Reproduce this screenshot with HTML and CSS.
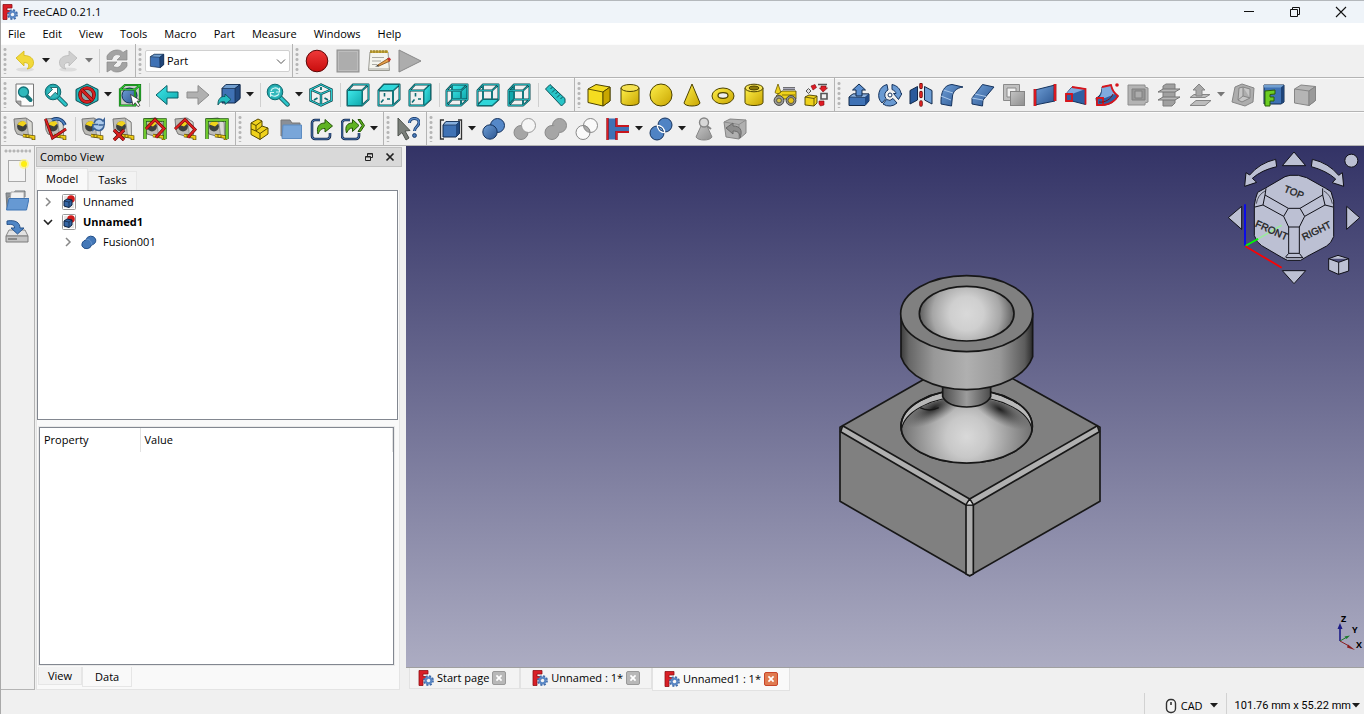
FILE: index.html
```html
<!DOCTYPE html>
<html lang="en">
<head>
<meta charset="utf-8">
<title>FreeCAD 0.21.1</title>
<link rel="stylesheet" href="styles.css">
</head>
<body>
<svg class="defs" aria-hidden="true">
  <defs>
    <linearGradient id="gBlue" x1="0" y1="0" x2="1" y2="1"><stop offset="0" stop-color="#6fa0d8"/><stop offset="1" stop-color="#2c5590"/></linearGradient>
    <linearGradient id="gYel" x1="0" y1="0" x2="1" y2="1"><stop offset="0" stop-color="#fff04a"/><stop offset="1" stop-color="#c8a400"/></linearGradient>
    <linearGradient id="gGrey" x1="0" y1="0" x2="1" y2="1"><stop offset="0" stop-color="#c4c4c4"/><stop offset="1" stop-color="#8e8e8e"/></linearGradient>
    <linearGradient id="gTeal" x1="0" y1="0" x2="1" y2="1"><stop offset="0" stop-color="#3fe8ea"/><stop offset="1" stop-color="#0fa8ac"/></linearGradient>
    <linearGradient id="gRed" x1="0" y1="0" x2="0" y2="1"><stop offset="0" stop-color="#f03a3a"/><stop offset="1" stop-color="#c80d0d"/></linearGradient>
  </defs>
  <symbol id="logo" viewBox="0 0 16 16">
    <path d="M1 .5h9V4H5v2.500h4v3H5v6H1z" fill="#d91f26" stroke="#8e1015" stroke-width=".8"/>
    <circle cx="10.500" cy="10.500" r="4.400" fill="none" stroke="#3f6aa8" stroke-width="2" stroke-dasharray="2 1.456"/>
    <circle cx="10.500" cy="10.500" r="2.900" fill="none" stroke="#5a87c4" stroke-width="2.200"/>
  </symbol>
  <symbol id="cubeline" viewBox="0 0 24 24">
    <path d="M1.500 7.500h14.500v15H1.500zM7 1.500h15.500v15H7zM1.500 7.500 7 1.500M16 7.500l6.500-6M16 22.500l6.500-6M1.500 22.500l5.500-6" fill="none" stroke="#0a4a50" stroke-width="2" stroke-linejoin="round"/>
    <path d="M1.500 7.500h14.500v15H1.500zM7 1.500h15.500v15H7zM1.500 7.500 7 1.500M16 7.500l6.500-6M16 22.500l6.500-6M1.500 22.500l5.500-6" fill="none" stroke="#2ccfd2" stroke-width=".7"/>
  </symbol>
  <symbol id="cubeopen" viewBox="0 0 24 24">
    <path d="M1.500 7.500h14.500v15H1.500zM1.500 7.500 7 1.500h15.500v15l-6.500 6M16 7.500l6.500-6" fill="none" stroke="#0a4a50" stroke-width="2" stroke-linejoin="round"/>
    <path d="M1.500 7.500h14.500v15H1.500zM1.500 7.500 7 1.500h15.500v15l-6.500 6M16 7.500l6.500-6" fill="none" stroke="#2ccfd2" stroke-width=".7"/>
    <path d="M7.500 10v3.500M6.500 16.500 4 19.500M10 16h3" fill="none" stroke="#0d6c72" stroke-width="1.600"/>
  </symbol>
  <symbol id="tape" viewBox="0 0 24 24">
    <path d="M1 2 13 1l6 4 .5 14-3 1.500L4 17 2 13z" fill="#bdbcb7" stroke="#777" stroke-width="1"/>
    <path d="M13.500 1.500l5.500 4 .5 14-4-1z" fill="#dadad4" stroke="#777" stroke-width=".6"/>
    <circle cx="9" cy="9.500" r="4.900" fill="#3c403f"/>
    <path d="M4.500 7.500a5 5 0 0 1 9-1l-3.500 3z" fill="#f0d21b"/>
    <path d="M10 18.500 20.500 20v3" fill="none" stroke="#574500" stroke-width="3.600"/>
    <path d="M10 18.500 20.500 20v2.500" fill="none" stroke="#f1cf18" stroke-width="2.200"/>
    <path d="M13 18v2m3-1.500v2" stroke="#574500" stroke-width=".8"/>
  </symbol>
  <symbol id="mag" viewBox="0 0 24 24">
    <path d="M14 14l7.500 7.500" stroke="#0b4b50" stroke-width="4.400" stroke-linecap="round"/>
    <path d="M14 14l7.500 7.500" stroke="#2cc4c8" stroke-width="2.800" stroke-linecap="round"/>
    <circle cx="9" cy="9" r="7.800" fill="#1fa9ad" stroke="#0f6a70" stroke-width="1"/>
    <circle cx="9" cy="9" r="6" fill="#35b9bd"/>
  </symbol>
  <symbol id="bluecube" viewBox="0 0 24 24">
    <path d="M2 5.500 8 2h14v15.500L17 22 2 20z" fill="#3f72b5" stroke="#11294a"/>
    <path d="M2 5.500 8 2h14l-6 4.500z" fill="#729fcf" stroke="#11294a" stroke-width=".8"/>
    <path d="M16 6.500 22 2v15.500L16.500 22z" fill="#1f4478" stroke="#11294a" stroke-width=".8"/>
  </symbol>
  <symbol id="docpart" viewBox="0 0 16 16">
    <rect x="1.500" y=".5" width="13" height="15" rx="1" fill="#fff" stroke="#9a9a9a"/>
    <rect x="3" y="2" width="10" height="12" fill="#e6e6e6"/>
    <circle cx="10" cy="5" r="3.800" fill="#cf1c1c"/>
    <path d="M3 7l3-2 5 1v5l-3 2.500-5-1.500z" fill="#3465a4" stroke="#0f2340"/>
    <path d="M3 7l5 1 3-2M8 8v5" fill="none" stroke="#0f2340" stroke-width=".7"/>
  </symbol>
  <symbol id="down" viewBox="0 0 8 5"><path d="M0 0h8L4 4.500z"/></symbol>
  <symbol id="chev" viewBox="0 0 8 10"><path d="M2 1l4 4-4 4" fill="none" stroke="currentColor" stroke-width="1.500"/></symbol>
</svg>

<header class="titlebar">
  <svg class="i16"><use href="#logo"/></svg>
  <h1>FreeCAD 0.21.1</h1>
  <div class="winbtns">
    <button aria-label="Minimize"><svg viewBox="0 0 12 12"><path d="M1 5.500h10" stroke="#111"/></svg></button>
    <button aria-label="Restore"><svg viewBox="0 0 12 12"><path d="M1.500 3.500h7v7h-7zM3.500 3V1.500h7v7H9" fill="none" stroke="#111"/></svg></button>
    <button aria-label="Close"><svg viewBox="0 0 12 12"><path d="M1 1l10 10M11 1L1 11" stroke="#111" stroke-width="1.100"/></svg></button>
  </div>
</header>
<nav class="menubar">
  <button>File</button><button>Edit</button><button>View</button><button>Tools</button><button>Macro</button><button>Part</button><button>Measure</button><button>Windows</button><button>Help</button>
</nav>

<div class="toolrow">
  <div class="toolbar">
    <span class="grip"></span>
    <button class="tool drop" aria-label="Undo"><svg viewBox="0 0 24 24"><ellipse cx="12" cy="20.500" rx="9" ry="2" fill="#ddd"/><path d="M3 9l8-7v4.500c6 0 10 3 9.500 8-.5 3.500-3 5-6.500 5.500 2.500-2 3-6.500-3-6.500V17z" fill="#f2d93b" stroke="#d3b716" stroke-width=".8"/></svg><svg class="caret"><use href="#down"/></svg></button>
    <button class="tool drop dim" aria-label="Redo"><svg viewBox="0 0 24 24"><ellipse cx="12" cy="20.500" rx="9" ry="2" fill="#ddd"/><path d="M21 9l-8-7v4.500c-6 0-10 3-9.500 8 .5 3.500 3 5 6.500 5.500-2.500-2-3-6.500 3-6.500V17z" fill="#cfcfcf" stroke="#b9b9b9" stroke-width=".8"/></svg><svg class="caret"><use href="#down"/></svg></button>
    <span class="sep"></span>
    <button class="tool" aria-label="Refresh"><svg viewBox="0 0 24 24"><path d="M2 10.500V7c4-7 13-7.500 16-3.500L22 1v10h-10l4-4c-4-3-8-1-9 3.500z" fill="#a3a3a3" stroke="#888" stroke-width=".7"/><path d="M22 13.500V17c-4 7-13 7.500-16 3.500L2 23V13h10l-4 4c4 3 8 1 9-3.500z" fill="#a3a3a3" stroke="#888" stroke-width=".7"/></svg></button>
  </div>
  <div class="toolbar">
    <span class="grip"></span>
    <div class="workbench">
      <svg viewBox="0 0 24 24" class="i16"><use href="#bluecube"/></svg>
      <select aria-label="Workbench"><option>Part</option></select>
      <svg viewBox="0 0 10 6" class="arrow"><path d="M1 .5l4 4 4-4" fill="none" stroke="#555"/></svg>
    </div>
  </div>
  <div class="toolbar last">
    <span class="grip"></span>
    <button class="tool" aria-label="Record macro"><svg viewBox="0 0 24 24"><circle cx="12" cy="12" r="10.800" fill="url(#gRed)" stroke="#5c0808"/></svg></button>
    <button class="tool" aria-label="Stop macro"><svg viewBox="0 0 24 24"><rect x="1" y="1" width="22" height="22" fill="#adadad" stroke="#8f8f8f"/><rect x="2.500" y="2.500" width="19" height="19" fill="none" stroke="#bdbdbd"/></svg></button>
    <button class="tool" aria-label="Macros"><svg viewBox="0 0 24 24"><path d="M3 3h18l1.500 18.500h-21z" fill="#f4f4ee" stroke="#9b9b94"/><path d="M3 1.500h18v2.500H3z" fill="#c8a93a"/><path d="M4 1v3M7 1v3M10 1v3M13 1v3M16 1v3M19 1v3" stroke="#8b7420"/><path d="M5 8.500h12M5 12h9M5 15.500h5M2 20h20" stroke="#a9a9a3"/><path d="M10 16.500l11-7 2 2.500-11 5z" fill="#e8a04a" stroke="#7d4a12" stroke-width=".8"/><path d="M8 17.500l3-1.500 1 1.500z" fill="#333"/><path d="M20 9.500l2 3 2-2-1.500-2z" fill="#c02f2f"/></svg></button>
    <button class="tool" aria-label="Execute macro"><svg viewBox="0 0 24 24"><path d="M1 1l22 11L1 23z" fill="#adadad" stroke="#8a8a8a"/></svg></button>
  </div>
</div>

<div class="toolrow">
  <div class="toolbar">
    <span class="grip"></span>
    <button class="tool" aria-label="Fit all"><svg viewBox="0 0 24 24"><path d="M3 1h17.500v22H7.500L3 19z" fill="#fbfbfb" stroke="#777"/><path d="M3 18h5v5z" fill="#aaa" stroke="#777" stroke-width=".7"/><path d="M13.500 13l4 4" stroke="#15777c" stroke-width="4" stroke-linecap="round"/><circle cx="10.500" cy="9" r="5" fill="#2fb9bc" stroke="#137077" stroke-width="1.300"/></svg></button>
    <button class="tool" aria-label="Fit selection"><svg viewBox="0 0 24 24"><use href="#mag"/><path d="M3.500 11.500l5-5-2-2h7v7l-2.200-2.300-5 5z" fill="#fff" stroke="#0d5359" stroke-width=".8"/></svg></button>
    <button class="tool drop" aria-label="Draw style"><svg viewBox="0 0 24 24"><path d="M1 6.500 12 1l11 5.500v11L12 23 1 17.500z" fill="#25b9bd" stroke="#0b4b50"/><circle cx="12" cy="12" r="7" fill="#8fa8aa" stroke="#5c0505" stroke-width="3.600"/><circle cx="12" cy="12" r="7" fill="none" stroke="#d62121" stroke-width="2.400"/><path d="M7 7l10 10" stroke="#5c0505" stroke-width="3.600"/><path d="M6.800 6.800l10.400 10.400" stroke="#d62121" stroke-width="2.400"/></svg><svg class="caret"><use href="#down"/></svg></button>
    <button class="tool" aria-label="Bounding box"><svg viewBox="0 0 24 24"><path d="M2 6.500 7 2h15v15l-5 5.500H2z" fill="#c9ccc9"/><circle cx="11.500" cy="12.500" r="7.500" fill="url(#gBlue)" stroke="#142f57"/><path d="M2 6.500h15v16H2zM2 6.500 7 2h15v15l-5 5.500M17 6.500 22 2" fill="none" stroke="#0f5a12" stroke-width="2.200"/><path d="M2 6.500h15v16H2zM2 6.500 7 2h15v15l-5 5.500M17 6.500 22 2" fill="none" stroke="#30c935" stroke-width="1.100"/><path d="M12.500 11.500l10 6-3.500.8 3 4-2 1.400-2.800-4-2.200 2.800z" fill="#fff" stroke="#333" stroke-width=".8"/></svg></button>
    <span class="sep"></span>
    <button class="tool" aria-label="Back"><svg viewBox="0 0 24 24"><path d="M1 12 12 2.500v6.500h11v6H12v6.500z" fill="url(#gTeal)" stroke="#0b5f66"/></svg></button>
    <button class="tool" aria-label="Forward"><svg viewBox="0 0 24 24"><path d="M23 12 12 2.500v6.500H1v6h11v6.500z" fill="#b0b0b0" stroke="#8d8d8d"/></svg></button>
    <button class="tool drop" aria-label="Linked object"><svg viewBox="0 0 24 24"><path d="M5 5.500 9 1.500h14v14L18 20H5z" fill="#3f72b5" stroke="#11294a"/><path d="M5 5.500 9 1.500h14l-5 4z" fill="#729fcf" stroke="#11294a" stroke-width=".7"/><path d="M18 5.500l5-4v14L18 20z" fill="#234a80" stroke="#11294a" stroke-width=".7"/><path d="M1 22c-.5-6 3-9 7-8.500V11l6 5.500-6 5V19c-3-1-5.500 0-7 3z" fill="#23bcc0" stroke="#0b4b50" stroke-width=".8"/></svg><svg class="caret"><use href="#down"/></svg></button>
    <span class="sep"></span>
    <button class="tool drop" aria-label="Zoom"><svg viewBox="0 0 24 24"><use href="#mag"/><path d="M5 8c1-3.500 6-4 7.500-1.500l1-1V9H10M13 10.500c-1 3-6 3.500-7.500 1.500l-1 1V9.500H8" fill="none" stroke="#d5f7f7" stroke-width="1.100"/></svg><svg class="caret"><use href="#down"/></svg></button>
    <button class="tool" aria-label="Isometric"><svg viewBox="0 0 24 24"><path d="M1.500 6.500 12 1.500l10.500 5v11L12 22.500l-10.500-5zM1.500 6.500 12 11l10.500-4.500M12 11v11.500" fill="none" stroke="#083c42" stroke-width="2.400"/><path d="M1.500 6.500 12 1.500l10.500 5v11L12 22.500l-10.500-5zM1.500 6.500 12 11l10.500-4.500M12 11v11.500" fill="none" stroke="#2ccfd2" stroke-width="1.100"/><path d="M12 4v3M5 17l3.500-2M19 17l-3.500-2" stroke="#0d6c72" stroke-width="1.800"/></svg></button>
    <span class="sep"></span>
    <button class="tool" aria-label="Front view"><svg viewBox="0 0 24 24"><use href="#cubeopen"/><path d="M1.500 7.500h14.500v15H1.500z" fill="url(#gTeal)" stroke="#0c6d72"/></svg></button>
    <button class="tool" aria-label="Top view"><svg viewBox="0 0 24 24"><use href="#cubeopen"/><path d="M1.500 7.500 7 1.500h15.500l-6.500 6z" fill="#2fd6d9" stroke="#0c6d72"/></svg></button>
    <button class="tool" aria-label="Right view"><svg viewBox="0 0 24 24"><use href="#cubeopen"/><path d="M16 7.500l6.500-6v15l-6.500 6z" fill="url(#gTeal)" stroke="#0c6d72"/></svg></button>
    <span class="sep"></span>
    <button class="tool" aria-label="Rear view"><svg viewBox="0 0 24 24"><path d="M7 2h15v14H7z" fill="url(#gTeal)"/><use href="#cubeline"/></svg></button>
    <button class="tool" aria-label="Bottom view"><svg viewBox="0 0 24 24"><use href="#cubeline"/><path d="M1.500 22.500l5.500-6h15.500l-6.500 6z" fill="#2fd6d9" stroke="#0c6d72"/></svg></button>
    <button class="tool" aria-label="Left view"><svg viewBox="0 0 24 24"><path d="M1.500 7.500l5.500-6v15l-5.500 6z" fill="#0fa8ac"/><use href="#cubeline"/></svg></button>
    <span class="sep"></span>
    <button class="tool" aria-label="Measure distance"><svg viewBox="0 0 24 24"><path d="M1.500 6 6 1.500 21 15.500v4L17.500 23z" fill="#27c4c7" stroke="#0b5158"/><path d="M8.500 4l-2 2M11 6.500l-3 3M13.500 9l-2 2M16 11.500l-3 3M18.500 14l-2 2" stroke="#0b5158"/></svg></button>
  </div>
  <div class="toolbar">
    <span class="grip"></span>
    <button class="tool" aria-label="Box"><svg viewBox="0 0 24 24"><path d="M1 6 9 1.500l14 2.500v14l-7 5L1 19.500z" fill="#f4dc20" stroke="#4d4300"/><path d="M1 6l15 3 7-5M16 9v14" fill="none" stroke="#4d4300" stroke-width=".9"/><path d="M16 9l7-5v14l-7 5z" fill="#c8a600" stroke="#4d4300" stroke-width=".9"/></svg></button>
    <button class="tool" aria-label="Cylinder"><svg viewBox="0 0 24 24"><path d="M3 5v14.500c0 4 18 4 18 0V5z" fill="url(#gYel)" stroke="#4d4300"/><ellipse cx="12" cy="5" rx="9" ry="3.500" fill="#f5e252" stroke="#4d4300"/></svg></button>
    <button class="tool" aria-label="Sphere"><svg viewBox="0 0 24 24"><circle cx="12" cy="12" r="11" fill="url(#gYel)" stroke="#4d4300"/></svg></button>
    <button class="tool" aria-label="Cone"><svg viewBox="0 0 24 24"><path d="M12 1 4 20c1 4 15 4 16 0z" fill="url(#gYel)" stroke="#4d4300"/></svg></button>
    <button class="tool" aria-label="Torus"><svg viewBox="0 0 24 24"><ellipse cx="12" cy="13" rx="11" ry="8" fill="url(#gYel)" stroke="#4d4300"/><ellipse cx="12" cy="12.500" rx="5" ry="2.800" fill="#efefef" stroke="#4d4300" stroke-width="1.200"/></svg></button>
    <button class="tool" aria-label="Tube"><svg viewBox="0 0 24 24"><path d="M3 5v14.500c0 4 18 4 18 0V5z" fill="url(#gYel)" stroke="#4d4300"/><ellipse cx="12" cy="5" rx="9" ry="3.800" fill="#f5e252" stroke="#4d4300"/><ellipse cx="12" cy="5" rx="5" ry="2" fill="#8d7a0a" stroke="#4d4300"/></svg></button>
    <button class="tool" aria-label="Create primitives"><svg viewBox="0 0 24 24"><path d="M5 1 2 9.500c1 1.500 5 1.500 6 0z" fill="#efd21c" stroke="#6d5d00" stroke-width=".8"/><path d="M10 5.500h12" stroke="#666" stroke-width="3"/><path d="M10 5.500h12" stroke="#aab" stroke-width="1.300"/><path d="M3 13l6-5h14v8H5z" fill="#efd21c" stroke="#4d4300" stroke-width=".8"/><path d="M9 12h13" stroke="#8a7500"/><circle cx="6" cy="17.500" r="4.900" fill="#9a9a95" stroke="#444"/><circle cx="6" cy="17.500" r="2.400" fill="#d8c44a" stroke="#444" stroke-width=".8"/><circle cx="18" cy="17.500" r="4.900" fill="#9a9a95" stroke="#444"/><circle cx="18" cy="17.500" r="3" fill="#e8c41a" stroke="#444" stroke-width=".8"/></svg></button>
    <button class="tool" aria-label="Shape builder"><svg viewBox="0 0 24 24"><path d="M1 14l4-2 8 1v7l-3 3-9-1z" fill="#efd21c" stroke="#4d4300" stroke-width=".9"/><path d="M1 14l9 1.500 3-2.500M10 15.500V23" fill="none" stroke="#4d4300" stroke-width=".8"/><path d="M14 1.500h9M17 10.500h6v5.500h-6z" fill="none" stroke="#555" stroke-width="1.600"/><path d="M2 8l2.500-2.500L7 8l-2.500 2.500z" fill="#ddd" stroke="#555"/><path d="M7 3l4-1.500 1.500 3L9 7zM17 3h5v2h1.500L19 9l-3.500-4H17zM15 18h5v4l-3.500 1L15 21z" fill="#e01b24" stroke="#7a0a0f" stroke-width=".6"/></svg></button>
  </div>
  <div class="toolbar last">
    <span class="grip"></span>
    <button class="tool" aria-label="Extrude"><svg viewBox="0 0 24 24"><path d="M2 14l4-3h16v7l-4 4.500H2z" fill="#3f72b5" stroke="#11294a"/><path d="M2 14l4-3h16l-4 3.500z" fill="#8fb4e0" stroke="#11294a" stroke-width=".7"/><path d="M18 14.500l4-3.500v7l-4 4.500z" fill="#204a87"/><path d="M12 1l6.500 6H15v6H9V7H5.500z" fill="#5b8fd0" stroke="#11294a"/></svg></button>
    <button class="tool" aria-label="Revolve"><svg viewBox="0 0 24 24"><path d="M9 1.500A11 11 0 0 0 4 20l4-4.500A5.500 5.500 0 0 1 10 7zM5 21a11 11 0 0 0 14-1l-4-4.500a5 5 0 0 1-6.500 1z" fill="#6a9ad2" stroke="#15335e"/><path d="M14 1.500c5 1 8.500 4.500 9 9h1l-3.500 6-5-6h2.500c0-1.500-1.500-3-4-4z" fill="#6a9ad2" stroke="#15335e"/><circle cx="12" cy="12" r="2" fill="#fff" stroke="#15335e"/></svg></button>
    <button class="tool" aria-label="Mirror"><svg viewBox="0 0 24 24"><path d="M1 7.500l7.500-4V17L1 21z" fill="#2a5a9c" stroke="#11294a"/><path d="M15.500 3.500l7.500 4V21l-7.500-4z" fill="#6f9fd6" stroke="#11294a"/><path d="M12 1.500v3M12 9.500v4M12 19v3" stroke="#5c0505" stroke-width="3.400" stroke-linecap="round"/><path d="M12 1.500v3M12 9.500v4M12 19v3" stroke="#d62121" stroke-width="2.200" stroke-linecap="round"/></svg></button>
    <button class="tool" aria-label="Fillet"><svg viewBox="0 0 24 24"><path d="M1 21c-.5-12 3-19 11-19.500L23 4c-7 1-10 5-10.500 9l-1 10z" fill="url(#gBlue)" stroke="#15335e"/><path d="M1 13l10 4M3.500 7l9.500 3" stroke="#a9c7ea"/></svg></button>
    <button class="tool" aria-label="Chamfer"><svg viewBox="0 0 24 24"><path d="M1 21v-6L11.500 1.500 23 4 12 17l-.5 6z" fill="url(#gBlue)" stroke="#15335e"/><path d="M1 15l11 2M4 11l11 2.500" stroke="#a9c7ea"/></svg></button>
    <button class="tool" aria-label="Make face"><svg viewBox="0 0 24 24"><path d="M1.500 1.500h16v16h-16zM5 5v9h9V5z" fill="#c0c0c0" fill-rule="evenodd" stroke="#8a8a8a"/><rect x="8.500" y="8.500" width="14" height="14" fill="url(#gGrey)" stroke="#848484"/></svg></button>
    <button class="tool" aria-label="Ruled surface"><svg viewBox="0 0 24 24"><path d="M2 7l20-5v16L2 22z" fill="url(#gBlue)" stroke="#15335e"/><path d="M2 6v17M22 1v17" stroke="#8a0a0a" stroke-width="2.800"/><path d="M2 6v17M22 1v17" stroke="#e01b24" stroke-width="1.800"/></svg></button>
    <button class="tool" aria-label="Loft"><svg viewBox="0 0 24 24"><path d="M2 11 8 4l13.500 2v15.500L8 18H2z" fill="#2f60a3" stroke="#15335e"/><path d="M2 11 8 4l13.500 2L8 11z" fill="#7fabdf"/><path d="M2 11h6v7H2zM8 4l13.500 2v15.500" fill="none" stroke="#d8151c" stroke-width="1.800"/></svg></button>
    <button class="tool" aria-label="Sweep"><svg viewBox="0 0 24 24"><path d="M1 15c5-2 6-7 6-11l9-2c1 5 3 8 7 11-3 6-9 9-15 9H2z" fill="#2f60a3" stroke="#15335e"/><path d="M7 4l9-2c1 5 2 7 4 9l-10 4H4c3-3 3-7 3-11z" fill="#7fabdf"/><path d="M2 15h6v7H2zM7 4l9-2c1 5 3 8 7 11-3 5-8 8-14 9" fill="none" stroke="#d8151c" stroke-width="1.800"/><path d="M4 19c6 1 12-3 14-8" fill="none" stroke="#7d0e14"/><circle cx="22" cy="2" r="1.800" fill="#d8151c"/></svg></button>
    <button class="tool" aria-label="Section"><svg viewBox="0 0 24 24"><path d="M2 2h17v2l3 1v14l-3 1v2H2z" fill="#b3b3b3" stroke="#8e8e8e"/><path d="M6 6h13v11H6z" fill="#969696" stroke="#808080"/><path d="M9 8h7v7H9z" fill="#adadad" stroke="#808080"/></svg></button>
    <button class="tool" aria-label="Cross sections"><svg viewBox="0 0 24 24"><path d="M6 3l3-2h9v19l-3 3H6z" fill="#a0a0a0" stroke="#7d7d7d"/><path d="M1 9l5-3h17l-5 3zM1 17l5-3h17l-5 3z" fill="#b7b7b7" stroke="#757575"/></svg></button>
    <button class="tool drop dim" aria-label="Offset"><svg viewBox="0 0 24 24"><path d="M2 22.500l6-5h15l-6 5zM2 14.500l4-3h16l-5 3z" fill="#bcbcbc" stroke="#858585"/><path d="M11 1l6 6h-3v6H8V7H5z" fill="#a9a9a9" stroke="#858585"/></svg><svg class="caret"><use href="#down"/></svg></button>
    <button class="tool" aria-label="Thickness"><svg viewBox="0 0 24 24"><path d="M4 4l7-3 12 4-1 14-8 4-13-4z" fill="#adadad" stroke="#868686"/><path d="M8 5l4-1 7 2v9l-8 4-4-2zM12 4v9l7 2M12 13l-5 4" fill="#c6c6c6" stroke="#868686"/></svg></button>
    <button class="tool" aria-label="Projection on surface"><svg viewBox="0 0 24 24"><path d="M2 2h20v17l-3 2H2z" fill="#3f72b5" stroke="#11294a"/><path d="M2 2h20l-3 2.500H2z" fill="#729fcf"/><path d="M19 4.500 22 2v17l-3 2z" fill="#1f4478"/><path d="M3 8l10-1v4l-5 .5V14h4v4H8v5H3z" fill="#6cce22" stroke="#2b6005"/></svg></button>
    <button class="tool" aria-label="Color per face"><svg viewBox="0 0 24 24"><path d="M1.500 6 8 2l14.500 1.500v14L16 22.500 1.500 20z" fill="#b5b5b5" stroke="#868686"/><path d="M1.500 6 16 8l6.500-4.500M16 8v14.500" fill="none" stroke="#868686"/><path d="M16 8l6.500-4.500v14L16 22.500z" fill="#9a9a9a" stroke="#868686"/></svg></button>
  </div>
</div>

<div class="toolrow">
  <div class="toolbar">
    <span class="grip"></span>
    <button class="tool" aria-label="Measure linear"><svg viewBox="0 0 24 24"><use href="#tape"/></svg></button>
    <button class="tool" aria-label="Measure angular"><svg viewBox="0 0 24 24"><use href="#tape"/><path d="M8 3c6-3 11 0 13 5" fill="none" stroke="#173a6b" stroke-width="3.400"/><path d="M8 3c6-3 11 0 13 5" fill="none" stroke="#4f83c4" stroke-width="1.800"/><path d="M1.500 2l7 19L22 12" fill="none" stroke="#6b0505" stroke-width="2.800"/><path d="M1.500 2l7 19L22 12" fill="none" stroke="#dc2020" stroke-width="1.700"/></svg></button>
    <span class="sep"></span>
    <button class="tool" aria-label="Refresh measurements"><svg viewBox="0 0 24 24"><use href="#tape"/><path d="M13 6c2-5 7-5 9-2l1.500-2v6h-6M23 9c-1 5-7 6-9.500 2.500L12 13V7.500h5" fill="#aecbeb" stroke="#3a6196" stroke-width="1.500"/></svg></button>
    <button class="tool" aria-label="Clear measurements"><svg viewBox="0 0 24 24"><use href="#tape"/><path d="M2 13l10 10M12 13L2 23" stroke="#5c0505" stroke-width="3.400"/><path d="M2 13l10 10M12 13L2 23" stroke="#dc2020" stroke-width="2.200"/></svg></button>
    <button class="tool" aria-label="Toggle all measurements"><svg viewBox="0 0 24 24"><use href="#tape"/><path d="M2 22V3h20v19" fill="none" stroke="#1d5c08" stroke-width="3.400"/><path d="M2 22V3h20v19" fill="none" stroke="#6fc92c" stroke-width="2"/><path d="M3 12 12 2.500l9 9-8 9" fill="none" stroke="#6b0505" stroke-width="3"/><path d="M3 12 12 2.500l9 9-8 9" fill="none" stroke="#dc2020" stroke-width="1.900"/></svg></button>
    <button class="tool" aria-label="Toggle 3D measurements"><svg viewBox="0 0 24 24"><use href="#tape"/><path d="M1 12 11 2.500l10 10-7 8" fill="none" stroke="#6b0505" stroke-width="3"/><path d="M1 12 11 2.500l10 10-7 8" fill="none" stroke="#dc2020" stroke-width="1.900"/></svg></button>
    <button class="tool" aria-label="Toggle delta measurements"><svg viewBox="0 0 24 24"><use href="#tape"/><path d="M2 22V3h20v19" fill="none" stroke="#1d5c08" stroke-width="3.400"/><path d="M2 22V3h20v19" fill="none" stroke="#6fc92c" stroke-width="2"/></svg></button>
  </div>
  <div class="toolbar">
    <span class="grip"></span>
    <button class="tool" aria-label="Create part"><svg viewBox="0 0 24 24"><path d="M3 13V6l7-4 4 2v5l6 2v6l-8 5.500-9-5z" fill="#f0d21c" stroke="#574a00"/><path d="M3 6l5 2.500L14 4M8 8.500V14l6-5M8 14l4 2.500 8-5.500M3 12l5 2M12 16.500v6" fill="none" stroke="#574a00"/></svg></button>
    <button class="tool" aria-label="Create group"><svg viewBox="0 0 24 24"><path d="M2 3h9l2 3h8v13H2z" fill="#8a8f96" stroke="#777"/><path d="M4 8h18.500v13.500H3z" fill="#79a6d9" stroke="#5d8cc2"/></svg></button>
    <button class="tool" aria-label="Create link"><svg viewBox="0 0 24 24"><path d="M10 3H5a3 3 0 0 0-3 3v13a3 3 0 0 0 3 3h12a3 3 0 0 0 3-3v-3" fill="none" stroke="#15294a" stroke-width="2.600"/><path d="M10 3H5a3 3 0 0 0-3 3v13a3 3 0 0 0 3 3h12a3 3 0 0 0 3-3v-3" fill="none" stroke="#4a78b5" stroke-width="1"/><path d="M8 17c-2-7 1-11 7-11V2.500L22.500 9 15 15v-3.500c-4 0-5 1.500-7 5.500z" fill="#5fb321" stroke="#245506"/></svg></button>
    <button class="tool drop" aria-label="Link actions"><svg viewBox="0 0 24 24"><path d="M9 3H4a3 3 0 0 0-3 3v13a3 3 0 0 0 3 3h11a3 3 0 0 0 3-3v-3" fill="none" stroke="#15294a" stroke-width="2.600"/><path d="M9 3H4a3 3 0 0 0-3 3v13a3 3 0 0 0 3 3h11a3 3 0 0 0 3-3v-3" fill="none" stroke="#4a78b5" stroke-width="1"/><path d="M5.500 16c-2-7 1-10 6-10V2.500L18 8.500l-6.500 6V11c-3 0-4 1.500-6 5zM17 2.500h2.500l4 6-4 6H17l4-6z" fill="#5fb321" stroke="#245506"/></svg><svg class="caret"><use href="#down"/></svg></button>
  </div>
  <div class="toolbar">
    <span class="grip"></span>
    <button class="tool" aria-label="What's this?"><svg viewBox="0 0 24 24"><path d="M2 1l12 12.500-5 .5 4 7-3 2-4-7.500L2 19z" fill="#7a7f7a" stroke="#4f544f"/><path d="M13.500 6c0-6 9.500-6 9.500-.5 0 4-4.500 4-4.500 8.500" fill="none" stroke="#173a6b" stroke-width="3"/><path d="M13.500 6c0-6 9.500-6 9.500-.5 0 4-4.500 4-4.500 8.500" fill="none" stroke="#5a8ac8" stroke-width="1.400"/><circle cx="18.500" cy="18.500" r="1.900" fill="#4a7cba" stroke="#173a6b"/></svg></button>
  </div>
  <div class="toolbar last">
    <span class="grip"></span>
    <button class="tool drop" aria-label="Compound tools"><svg viewBox="0 0 24 24"><path d="M5 3H1.500v19H5M19 3h3.500v19H19" fill="none" stroke="#333" stroke-width="1.300"/><path d="M4 8l3-3.500h13.500v12L17 20H4z" fill="#3f72b5" stroke="#11294a"/><path d="M4 8l3-3.500h13.500L17 8z" fill="#85aede" stroke="#11294a" stroke-width=".7"/><path d="M17 8l3.500-3.500v12L17 20z" fill="#234a80"/></svg><svg class="caret"><use href="#down"/></svg></button>
    <button class="tool" aria-label="Boolean"><svg viewBox="0 0 24 24"><circle cx="15.500" cy="8.500" r="7" fill="#5588c8" stroke="#15335e"/><circle cx="8" cy="15" r="7.200" fill="url(#gBlue)" stroke="#15335e"/></svg></button>
    <button class="tool" aria-label="Cut"><svg viewBox="0 0 24 24"><circle cx="8" cy="15.500" r="7" fill="#a6a6a6" stroke="#8a8a8a"/><circle cx="15.500" cy="8.500" r="7" fill="#f5f5f5" stroke="#999"/></svg></button>
    <button class="tool" aria-label="Union"><svg viewBox="0 0 24 24"><circle cx="15.500" cy="8.500" r="7" fill="#a6a6a6" stroke="#8a8a8a"/><circle cx="8" cy="15.500" r="7" fill="#a6a6a6" stroke="#8a8a8a"/><path d="M9.500 8.500h6v7H9.500z" fill="#a6a6a6"/></svg></button>
    <button class="tool" aria-label="Intersection"><svg viewBox="0 0 24 24"><circle cx="15.500" cy="8.500" r="7" fill="#fafafa" stroke="#888"/><circle cx="8" cy="15.500" r="7" fill="#fafafa" stroke="#888"/><path d="M8.500 8.600a7 7 0 0 1 6.500 6.800 7 7 0 0 1-6.500-6.800z" fill="#aaa" stroke="#888"/></svg></button>
    <button class="tool drop" aria-label="Join features"><svg viewBox="0 0 24 24"><path d="M2 1.500h8V9h13v6H10v7.500H2z" fill="#3f72b5"/><path d="M1.500 1v22M10.500 1v8H23M10.500 23v-8H23" fill="none" stroke="#7d0a0f" stroke-width="2.200"/><path d="M1.500 1v22M10.500 1v8H23M10.500 23v-8H23" fill="none" stroke="#e01b24" stroke-width="1.400"/></svg><svg class="caret"><use href="#down"/></svg></button>
    <button class="tool drop" aria-label="Split features"><svg viewBox="0 0 24 24"><circle cx="16" cy="8" r="7" fill="#4f83c4" stroke="#15335e"/><circle cx="8" cy="16" r="7" fill="#4f83c4" stroke="#15335e"/><path d="M8.500 8.500a7 7 0 0 1 7 7 7 7 0 0 1-7-7z" fill="#9dc0e8" stroke="#fff" stroke-width="1.600"/><path d="M9.500 9.500a6 6 0 0 1 5 5 6 6 0 0 1-5-5z" fill="#6f9fd6" stroke="#15335e" stroke-width=".8"/></svg><svg class="caret"><use href="#down"/></svg></button>
    <button class="tool" aria-label="Check geometry"><svg viewBox="0 0 24 24"><path d="M9 9 4 20c2 4 14 4 16 0L15 9z" fill="url(#gGrey)" stroke="#868686"/><circle cx="12" cy="5.500" r="4.500" fill="#d8d8d8" stroke="#868686" stroke-width="1.400"/><path d="M15 9l4 3" stroke="#868686" stroke-width="2"/></svg></button>
    <button class="tool" aria-label="Defeaturing"><svg viewBox="0 0 24 24"><path d="M1 5l6-3 16 1v13l-7 6L3 20z" fill="#b0b0b0" stroke="#868686"/><path d="M1 5l15 2.500L23 3M16 7.500V22" fill="none" stroke="#8d8d8d"/><path d="M3 11l7-5v3c7 0 10 4 7 12 0-5-2-7-7-7v3z" fill="#8c8c8c" stroke="#6a6a6a"/></svg></button>
  </div>
</div>

<main class="work">
  <div class="sidebar">
    <span class="hgrip"></span>
    <button aria-label="New"><svg viewBox="0 0 24 24"><rect x="3.500" y="1.500" width="17" height="21" fill="#f3f3f3" stroke="#a9a9a9"/><circle cx="19" cy="5" r="5" fill="#fff47a" opacity=".7"/><circle cx="19" cy="5" r="3" fill="#fdee12"/></svg></button>
    <button aria-label="Open"><svg viewBox="0 0 24 24"><path d="M1 4h8l1-2h10v6H3v12H2z" fill="#8f9499" stroke="#73787d"/><path d="M6 3h13v8H5z" fill="#f1f1f1" stroke="#aaa"/><path d="M4 9.500h20l-2.500 11.500H1.500z" fill="#6699d3" stroke="#3f74b3"/></svg></button>
    <button aria-label="Save"><svg viewBox="0 0 24 24"><path d="M4 11h16l3 6H1z" fill="#e2e2e2" stroke="#888"/><path d="M1 17h22v6H1z" fill="#c4c4c4" stroke="#7c7c7c"/><path d="M3 20h9" stroke="#777" stroke-width="1.500"/><path d="M2 2c9-1.500 13 2 13 7h4l-6.500 6L6 9h3.500c0-3-2-4-7.500-3.500z" fill="#4f86c6" stroke="#27528a"/></svg></button>
  </div>

  <aside class="combo">
    <div class="dockhead">
      <h2>Combo View</h2>
      <button aria-label="Float"><svg viewBox="0 0 10 10"><path d="M1.500 4.500h5v4h-5zM3.500 4V1.500h5v4H7M3.500 2h5M1.500 5h5" fill="none" stroke="#222"/></svg></button>
      <button aria-label="Close"><svg viewBox="0 0 10 10"><path d="M1.500 1.500l7 7M8.500 1.500l-7 7" stroke="#222" stroke-width="1.700"/></svg></button>
    </div>
    <div class="tabs top"><button class="on">Model</button><button>Tasks</button></div>
    <div class="pane">
      <ul class="tree">
        <li><svg class="chev"><use href="#chev"/></svg><svg class="i16"><use href="#docpart"/></svg><span>Unnamed</span></li>
        <li class="active"><svg class="chev" viewBox="0 0 10 8"><path d="M1 2l4 4 4-4" fill="none" stroke="#222" stroke-width="1.600"/></svg><svg class="i16"><use href="#docpart"/></svg><span>Unnamed1</span></li>
        <li class="child"><svg class="chev"><use href="#chev"/></svg><svg class="i16" viewBox="0 0 16 16"><path d="M5 6a5 4.800 0 0 1 9.500-1c1 3-1 5.500-4 6a5 4.500 0 0 1-9.500 1C.5 9 2 6.500 5 6z" fill="#4478b8" stroke="#24508a"/><path d="M5.500 5.500c3-.5 5 2 5 5" fill="none" stroke="#6a9ad2"/></svg><span>Fusion001</span></li>
      </ul>
      <div class="props">
        <table><thead><tr><th scope="col">Property</th><th scope="col">Value</th></tr></thead></table>
      </div>
      <div class="tabs bottom"><button>View</button><button class="on">Data</button></div>
    </div>
  </aside>

  <section class="mdi">
    <div class="viewport">
      <svg class="model" viewBox="0 0 900 990" role="img" aria-label="3D model">
        <defs>
          <radialGradient id="bowl" gradientUnits="userSpaceOnUse" cx="440" cy="161" r="146"><stop offset="0" stop-color="#d9d9d9"/><stop offset=".35" stop-color="#cfcfcf"/><stop offset=".7" stop-color="#a6a6a6"/><stop offset="1" stop-color="#565656"/></radialGradient>
          <linearGradient id="wall"><stop offset="0" stop-color="#3c3c3c"/><stop offset=".06" stop-color="#666"/><stop offset=".25" stop-color="#989898"/><stop offset=".5" stop-color="#b0b0b0"/><stop offset=".75" stop-color="#989898"/><stop offset=".94" stop-color="#5c5c5c"/><stop offset="1" stop-color="#2c2c2c"/></linearGradient>
          <radialGradient id="flare" gradientUnits="userSpaceOnUse" cx="440" cy="530" r="205"><stop offset="0" stop-color="#d9d9d9"/><stop offset=".3" stop-color="#c8c8c8"/><stop offset=".6" stop-color="#a0a0a0"/><stop offset="1" stop-color="#6c6c6c"/></radialGradient>
          <radialGradient id="shade"><stop offset="0" stop-color="#101010" stop-opacity=".9"/><stop offset=".5" stop-color="#303030" stop-opacity=".45"/><stop offset="1" stop-color="#505050" stop-opacity="0"/></radialGradient>
          <linearGradient id="neck"><stop offset="0" stop-color="#4c4c4c"/><stop offset=".5" stop-color="#9c9c9c"/><stop offset="1" stop-color="#4c4c4c"/></linearGradient>
          <clipPath id="hole"><ellipse cx="440" cy="499" rx="197" ry="110"/></clipPath>
          <clipPath id="cone"><path d="M366 420C290 436 246 476 247 520 270 570 340 609 440 609S610 570 634 520C636 476 590 436 512 420z"/></clipPath>
        </defs>
        <g stroke="#171717" stroke-width="5" stroke-linejoin="round" stroke-linecap="round">
          <path d="M60 502 445 282 840 502V724L449 947 60 724z" fill="#808080"/>
          <path d="M68 497 449 717 438 735 62 515z" fill="#b0b0b0"/>
          <path d="M832 497 449 717 460 735 838 515z" fill="#b0b0b0"/>
          <path d="M438 735h22v207l-11 5-11-5z" fill="#adadad"/>
          <path d="M449 717l-11 18h22z" fill="#ddd" stroke-width="3.500"/>
          <ellipse cx="440" cy="499" rx="197" ry="110" fill="#b8b8b8"/>
          <g clip-path="url(#hole)">
            <ellipse cx="440" cy="518" rx="196" ry="108" fill="#858585" stroke-width="4"/>
            <ellipse cx="440" cy="526" rx="192" ry="108" fill="#969696" stroke-width="4"/>
          </g>
        </g>
        <g clip-path="url(#cone)">
          <rect x="240" y="380" width="400" height="235" fill="url(#flare)"/>
          <ellipse cx="342" cy="444" rx="100" ry="40" fill="url(#shade)" transform="rotate(-28 342 444)"/>
          <ellipse cx="540" cy="448" rx="100" ry="40" fill="url(#shade)" transform="rotate(30 540 448)"/>
        </g>
        <ellipse cx="440" cy="499" rx="197" ry="110" fill="none" stroke="#171717" stroke-width="5"/>
        <path d="M300 443c20 10 40 8 56 0" fill="none" stroke="#171717" stroke-width="4"/>
        <path d="M368 380V410c10 20 38 31 72 31s62-11 72-31V380z" fill="url(#neck)" stroke="#171717" stroke-width="5"/>
        <g stroke="#171717" stroke-width="5">
          <path d="M243 161V290C262 345 338 389 440 389S618 345 638 290V161z" fill="url(#wall)"/>
          <ellipse cx="440" cy="161" rx="198" ry="114" fill="#808080"/>
          <ellipse cx="440" cy="161" rx="142" ry="82" fill="url(#bowl)"/>
        </g>
      </svg>
      <svg class="navcube" viewBox="0 3 462 447" role="img" aria-label="Navigation cube">
        <g fill="#bcc0d3" stroke="#101018" stroke-width="3" stroke-linejoin="round">
          <path d="M252 21l35 41h-70zM252 416l35-39h-70zM55 218l40-34v69zM449 218l-39-34v69z"/>
          <path d="M197 43l3 22q-45 10-73 35l13 12-36 12 4-41 11 7q30-36 78-47z"/>
          <path d="M307 43l-3 22q45 12 73 37l-10 11 34 11-4-41-11 8q-30-37-79-48z"/>
          <circle cx="424" cy="47" r="19.500"/>
          <path d="M356 341l28-10 32 10v37l-31 10-29-13zM356 341l30 11 30-11M386 352v36"/>
          <path d="M240 91h25l25 7 57 32 16 10 8 28v107l-9 17-12 11-60 32-18 11h-40l-17-9-60-35-13-12-9-18v-92l4-20 6-18 22-12 60-35z"/>
        </g>
        <g fill="none" stroke="#101018" stroke-width="3">
          <path d="M235 190h35l14 24-16 32h-32l-15-32zM168 130l-3 20 70 40M338 130v20l-68 40M165 150l-6 30 62 34M338 150l7 30-61 34M159 180l-24 6M345 180l24 6M236 246v79h32v-79M236 325l-10 12M268 325l11 14M228 338h50"/>
          <path d="M165 138q-22 12-26 38M342 138q20 12 25 38" stroke-width="2"/>
        </g>
        <path d="M105 302V178" stroke="#00f" stroke-width="5"/>
        <path d="M107 302l38-21" stroke="#0f0" stroke-width="5"/>
        <path d="M145 281l70-40" stroke="#9be89f" stroke-width="5"/>
        <path d="M106 304l109 64" stroke="#f00" stroke-width="5"/>
        <g class="cubetext">
          <text x="252" y="152" transform="rotate(22 252 142)">TOP</text>
          <text x="185" y="266" transform="rotate(24 185 256)">FRONT</text>
          <text x="319" y="268" transform="rotate(-26 319 256)">RIGHT</text>
        </g>
      </svg>
      <svg class="axes" viewBox="0 -4 28 44" role="img" aria-label="Axes">
        <path d="M4 27V12" stroke="#1c1c86" stroke-width="1.600"/><path d="M4 9l2.500 6h-5z" fill="#1c1c86"/>
        <path d="M4 27l7-4" stroke="#1c7a2c"/><path d="M14 21.500l-5.500 1 2 2.500z" fill="#1c7a2c"/>
        <path d="M4 27l9 5" stroke="#8a1c1c"/><path d="M19 36l-7-5.500-1 3z" fill="#8a1c1c"/>
        <text x="5" y="8">Z</text><text x="16" y="19">Y</text><text x="20" y="34">X</text>
      </svg>
    </div>
    <div class="doctabs">
      <div class="doctab"><svg class="i16"><use href="#logo"/></svg><button>Start page</button><button class="x" aria-label="Close Start page"><svg viewBox="0 0 14 14"><path d="M4 4l6 6M10 4l-6 6" stroke="#fff" stroke-width="2"/></svg></button></div>
      <div class="doctab"><svg class="i16"><use href="#logo"/></svg><button>Unnamed : 1*</button><button class="x" aria-label="Close Unnamed"><svg viewBox="0 0 14 14"><path d="M4 4l6 6M10 4l-6 6" stroke="#fff" stroke-width="2"/></svg></button></div>
      <div class="doctab on"><svg class="i16"><use href="#logo"/></svg><button>Unnamed1 : 1*</button><button class="x" aria-label="Close Unnamed1"><svg viewBox="0 0 14 14"><path d="M4 4l6 6M10 4l-6 6" stroke="#fff" stroke-width="2"/></svg></button></div>
    </div>
  </section>
</main>

<footer class="status">
  <button class="nav"><svg class="mouse" viewBox="0 0 12 16"><rect x="1.500" y="1.500" width="9" height="13" rx="4" fill="#f4f4f4" stroke="#333" stroke-width="1.400"/><path d="M6 4v3" stroke="#333" stroke-width="1.600"/></svg>CAD<svg class="caret"><use href="#down"/></svg></button>
  <button class="dims">101.76 mm x 55.22 mm<svg class="caret"><use href="#down"/></svg></button>
</footer>
</body>
</html>
```
FILE: styles.css
```css
* { box-sizing: border-box; }
body {
  margin: 0;
  height: 100vh;
  display: flex;
  flex-direction: column;
  overflow: hidden;
  background: #f0f0f0;
  border-left: 1px solid #a9a9a9;
  color: #000;
  font: 11px/16px "Open Sans", "Noto Sans", sans-serif;
}
button {
  margin: 0;
  padding: 0;
  border: 0;
  background: none;
  color: inherit;
  font: inherit;
  white-space: nowrap;
}
svg { display: block; flex: none; }
h1, h2 { margin: 0; font: inherit; }
.defs { position: absolute; width: 0; height: 0; }
.i16 { width: 16px; height: 16px; }
.caret { width: 8px; height: 5px; fill: #1c1c1c; }

.titlebar {
  display: flex;
  align-items: center;
  gap: 5px;
  height: 23px;
  padding-left: 1px;
  background: #eff4f9;
  border-top: 1px solid #b4b8bc;
}
.titlebar h1 { flex: 1; }
.winbtns { display: flex; }
.winbtns button { width: 46px; display: grid; place-items: center; }
.winbtns svg { width: 12px; height: 12px; }

.menubar {
  display: flex;
  gap: 17px;
  height: 21px;
  padding-left: 7px;
  background: #fff;
}

.toolrow {
  display: flex;
  height: 34px;
  border-bottom: 1px solid #b4b4b4;
  box-shadow: inset 0 1px #fcfcfc;
}
.toolbar {
  display: flex;
  align-items: center;
  padding-right: 2px;
  border-right: 1px solid #b4b4b4;
}
.toolbar.last { border-right: 0; }
.grip {
  width: 9px;
  height: 27px;
  background: radial-gradient(circle, #b5b5b5 1px, transparent 2px) 2px 0 / 4px 5px repeat-y;
}
.tool {
  width: 31px;
  height: 30px;
  display: flex;
  align-items: center;
  gap: 5px;
  padding-left: 3px;
}
.tool > svg:first-child { width: 24px; height: 24px; }
.tool.drop { width: 43px; }
.dim .caret { fill: #777; }
.sep { width: 3px; height: 24px; margin-left: 3px; border-left: 1px solid #cfcfcf; }

.workbench { position: relative; width: 145px; }
.workbench select {
  appearance: none;
  display: block;
  width: 100%;
  height: 22px;
  padding: 1px 20px 0 21px;
  background: #fff;
  border: 1px solid #d0d0d0;
  border-radius: 2px;
  color: #000;
  font: inherit;
}
.workbench .i16 { position: absolute; left: 4px; top: 3px; }
.workbench .arrow { position: absolute; right: 4px; top: 9px; width: 10px; height: 6px; }

.work { flex: 1; min-height: 0; display: flex; }
.sidebar {
  width: 34px;
  display: flex;
  flex-direction: column;
  align-items: center;
  gap: 6px;
  padding: 3px 1px 0 0;
  border-right: 1px solid #b4b4b4;
  border-bottom: 1px solid #b4b4b4;
}
.sidebar svg { width: 24px; height: 24px; }
.hgrip {
  width: 27px;
  height: 4px;
  background: radial-gradient(circle, #b5b5b5 1px, transparent 2px) 0 0 / 4px 4px repeat-x;
}

.combo {
  width: 371px;
  display: flex;
  flex-direction: column;
  padding: 1px 4px 0 1px;
}
.dockhead {
  display: flex;
  align-items: center;
  gap: 11px;
  height: 20px;
  padding: 0 6px 0 3px;
  background: #d9d9d9;
  border: 1px solid #c0c0c0;
}
.dockhead h2 { flex: 1; }
.dockhead button svg { width: 10px; height: 10px; }
.tabs { display: flex; }
.tabs button {
  padding: 0 9px;
  background: #f3f3f3;
  border: 1px solid #e6e6e6;
}
.tabs .on { background: #f9f9f9; }
.tabs.top { height: 23px; align-items: flex-end; }
.tabs.top button { height: 19px; border-bottom: 0; padding-bottom: 2px; }
.tabs.top .on { height: 22px; }
.tabs.bottom { height: 22px; align-items: flex-start; padding-left: 1px; }
.tabs.bottom button { height: 18px; border-top: 0; }
.tabs.bottom .on { height: 20px; padding: 0 12px; }
.pane {
  flex: 1;
  min-height: 0;
  display: flex;
  flex-direction: column;
  margin-right: 2px;
  padding: 0 1px 0 0;
  background: #f9f9f9;
  border: 1px solid #e4e4e4;
  border-top: 0;
}
.tree {
  flex: 229 1 0;
  margin: 0;
  padding: 1px 0;
  list-style: none;
  background: #fff;
  border: 1px solid #828790;
}
.tree li {
  display: flex;
  align-items: center;
  height: 20px;
  padding-left: 5px;
}
.tree .child { padding-left: 25px; }
.tree .chev { width: 10px; height: 10px; color: #888; }
.tree .i16 { margin: 0 6px 0 8px; }
.tree .active { font-weight: bold; }
.props {
  flex: 239 1 0;
  margin: 7px 4px 2px 2px;
  background: #fff;
  border: 1px solid #828790;
  outline: 1px solid #e9e9e9;
}
.props table { width: 100%; border-collapse: collapse; table-layout: fixed; }
.props th {
  height: 24px;
  padding: 0 4px;
  border-right: 1px solid #e2e2e2;
  font-weight: normal;
  text-align: left;
}
.props th:first-child { width: 100px; }

.mdi { flex: 1; min-width: 0; display: flex; flex-direction: column; }
.viewport {
  position: relative;
  flex: 1;
  overflow: hidden;
  background: linear-gradient(#333366, #acacc2);
}
.model { position: absolute; left: 414px; top: 114px; width: 300px; height: 330px; }
.navcube { position: absolute; right: 0; top: 0; width: 154px; height: 149px; }
.cubetext { font: 30px "Liberation Sans", sans-serif; fill: #222; stroke: #222; stroke-width: 1px; text-anchor: middle; }
.axes { position: absolute; right: 0; bottom: 13px; width: 28px; height: 44px; font: bold 9px "Open Sans", sans-serif; }

.doctabs { display: flex; height: 23px; padding-left: 3px; border-top: 1px solid #a0a0a0; }
.doctab {
  display: flex;
  align-items: center;
  gap: 3px;
  height: 21px;
  padding: 0 11px;
  background: #f3f3f3;
  border: 1px solid #e2e2e2;
  border-top: 0;
}
.doctab:first-child { padding: 0 13px 0 8px; }
.doctab.on { height: 23px; background: #f9f9f9; }
.x { width: 14px; height: 14px; border-radius: 2px; background: #b8b8b8; border: 1px solid #999; }
.x svg { width: 12px; height: 12px; }
.on .x { background: #e07a50; border-color: #c8452a; }

.status { display: flex; justify-content: flex-end; height: 24px; padding-top: 3px; }
.status button {
  display: flex;
  align-items: center;
  gap: 4px;
  padding-top: 4px;
  border-left: 1px solid #d2d2d2;
}
.mouse { width: 12px; height: 16px; }
.status .nav { padding-left: 20px; padding-right: 8px; }
.nav .caret { margin-left: 3px; }
.status .dims { padding-left: 8px; padding-right: 4px; gap: 1px; font-family: Roboto, sans-serif; }
```
